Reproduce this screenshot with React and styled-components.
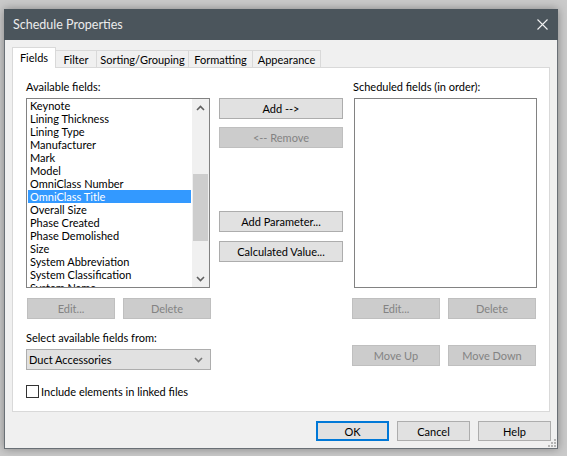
import React from "react";
import styled, { createGlobalStyle } from "styled-components";

const GlobalStyle = createGlobalStyle`
  html, body {
    margin: 0;
    padding: 0;
    background: #cacaca;
    width: 567px;
    height: 456px;
    overflow: hidden;
  }
  * {
    box-sizing: border-box;
  }
`;

const FONT = `"Lato", "Liberation Sans", sans-serif`;

const Dialog = styled.div`
  margin: 9px 0 0 4px;
  width: 554px;
  height: 440px;
  background: #f0f0f0;
  border: 1px solid #6a7076;
  border-top: none;
  box-shadow: 0 0 9px rgba(0, 0, 0, 0.35);
  display: flex;
  flex-direction: column;
  font-family: ${FONT};
  font-size: 11px;
  color: #000;
  position: relative;
`;

const TitleBar = styled.div`
  height: 31px;
  margin: 0 -1px;
  background: #4b555c;
  display: flex;
  align-items: center;
  justify-content: space-between;
  padding: 0 10px 0 9px;
  color: #ececec;
  font-size: 12.5px;
`;

const Body = styled.div`
  flex: 1;
  display: flex;
  flex-direction: column;
  padding: 8px 7px 0 7px;
`;

const TabStrip = styled.div`
  display: flex;
  align-items: flex-end;
  height: 20px;
  position: relative;
  z-index: 1;
  margin-bottom: -1px;
`;

const Tab = styled.div`
  width: ${(p) => p.$w}px;
  height: ${(p) => (p.$active ? 21 : 18)}px;
  background: ${(p) => (p.$active ? "#ffffff" : "#f0f0f0")};
  border: 1px solid #d9d9d9;
  border-bottom: ${(p) => (p.$active ? "none" : "1px solid #d9d9d9")};
  margin-left: ${(p) => (p.$first ? 0 : -1)}px;
  display: flex;
  align-items: center;
  justify-content: center;
  padding-bottom: ${(p) => (p.$active ? 2 : 0)}px;
  white-space: nowrap;
`;

const Panel = styled.div`
  height: 345px;
  background: #ffffff;
  border: 1px solid #d9d9d9;
  padding: 12px 0 0 13px;
  display: grid;
  grid-template-columns: 185px 125px 186px;
  column-gap: 8px;
  align-items: start;
`;

const Column = styled.div`
  display: flex;
  flex-direction: column;
  padding-top: ${(p) => p.$top || 0}px;
`;

const Label = styled.div`
  height: 14px;
  line-height: 14px;
  margin-top: ${(p) => p.$mt || 0}px;
  margin-left: ${(p) => p.$ml || 0}px;
  margin-bottom: 4px;
  white-space: nowrap;
`;

const ListBox = styled.div`
  height: 190px;
  width: ${(p) => p.$w}px;
  margin-left: ${(p) => p.$ml || 0}px;
  border: 1px solid #828282;
  background: #fff;
  display: flex;
`;

const Items = styled.div`
  flex: 1;
  padding: 0 1px;
  overflow: hidden;
`;

const Item = styled.div`
  height: 13px;
  line-height: 13px;
  padding-left: 2px;
  white-space: nowrap;
  background: ${(p) => (p.$selected ? "#3399ff" : "transparent")};
  color: ${(p) => (p.$selected ? "#ffffff" : "#000000")};
`;

const ScrollBar = styled.div`
  width: 17px;
  background: #f0f0f0;
  display: flex;
  flex-direction: column;
  align-items: center;
`;

const ScrollArrow = styled.div`
  height: 17px;
  width: 17px;
  display: flex;
  align-items: center;
  justify-content: center;
`;

const ScrollTrack = styled.div`
  flex: 1;
  width: 100%;
  display: flex;
  flex-direction: column;
  align-items: center;
  padding-top: 58px;
`;

const Thumb = styled.div`
  width: 15px;
  height: 67px;
  background: #cdcdcd;
`;

const ButtonRow = styled.div`
  display: flex;
  gap: 8px;
  margin-top: ${(p) => p.$mt || 0}px;
  margin-left: ${(p) => p.$ml || 0}px;
`;

const Button = styled.div`
  width: ${(p) => p.$w || 124}px;
  height: ${(p) => p.$h || 21}px;
  margin-top: ${(p) => p.$mt || 0}px;
  background: ${(p) => (p.$disabled ? "#cccccc" : "#e1e1e1")};
  border: ${(p) => (p.$default ? "2px solid #0078d7" : p.$disabled ? "1px solid #bfbfbf" : "1px solid #adadad")};
  color: ${(p) => (p.$disabled ? "#838383" : "#000000")};
  display: flex;
  align-items: center;
  justify-content: center;
  white-space: nowrap;
`;

const Select = styled.div`
  width: 185px;
  height: 21px;
  background: #e1e1e1;
  border: 1px solid #adadad;
  display: flex;
  align-items: center;
  justify-content: space-between;
  padding: 0 7px 0 2px;
`;

const CheckRow = styled.label`
  display: flex;
  align-items: center;
  gap: 2px;
  margin-top: 14px;
  height: 14px;
`;

const CheckBox = styled.span`
  width: 13px;
  height: 13px;
  border: 1px solid #333333;
  background: #ffffff;
`;

const Footer = styled.div`
  display: flex;
  justify-content: flex-end;
  gap: 8px;
  padding: 9px 0 0 0;
  margin-right: -1px;
`;

const Grip = styled.svg`
  position: absolute;
  right: 1px;
  bottom: 1px;
`;

const fields = [
  "Keynote",
  "Lining Thickness",
  "Lining Type",
  "Manufacturer",
  "Mark",
  "Model",
  "OmniClass Number",
  "OmniClass Title",
  "Overall Size",
  "Phase Created",
  "Phase Demolished",
  "Size",
  "System Abbreviation",
  "System Classification",
  "System Name",
];

const tabs = [
  { name: "Fields", w: 44 },
  { name: "Filter", w: 42 },
  { name: "Sorting/Grouping", w: 93 },
  { name: "Formatting", w: 65 },
  { name: "Appearance", w: 69 },
];

const Chevron = ({ up, color = "#606060" }) => (
  <svg width="9" height="6" viewBox="0 0 9 6">
    <path
      d={up ? "M1 5 L4.5 1.5 L8 5" : "M1 1 L4.5 4.5 L8 1"}
      fill="none"
      stroke={color}
      strokeWidth="1.6"
    />
  </svg>
);

const App = () => {
  return (
    <>
      <GlobalStyle />
      <Dialog>
        <TitleBar>
          <span>Schedule Properties</span>
          <svg width="11" height="11" viewBox="0 0 11 11">
            <path d="M0.5 0.5 L10.5 10.5 M10.5 0.5 L0.5 10.5" stroke="#f2f2f2" strokeWidth="1.1" />
          </svg>
        </TitleBar>
        <Body>
          <TabStrip>
            {tabs.map((t, i) => (
              <Tab key={t.name} $w={t.w} $active={i === 0} $first={i === 0}>
                {t.name}
              </Tab>
            ))}
          </TabStrip>
          <Panel>
            <Column>
              <Label>Available fields:</Label>
              <ListBox $w={184}>
                <Items>
                  {fields.map((f) => (
                    <Item key={f} $selected={f === "OmniClass Title"}>
                      {f}
                    </Item>
                  ))}
                </Items>
                <ScrollBar>
                  <ScrollArrow>
                    <Chevron up />
                  </ScrollArrow>
                  <ScrollTrack>
                    <Thumb />
                  </ScrollTrack>
                  <ScrollArrow>
                    <Chevron />
                  </ScrollArrow>
                </ScrollBar>
              </ListBox>
              <ButtonRow $mt={10} $ml={1}>
                <Button $w={88} $disabled>Edit...</Button>
                <Button $w={88} $disabled>Delete</Button>
              </ButtonRow>
              <Label $mt={12}>Select available fields from:</Label>
              <Select>
                <span>Duct Accessories</span>
                <Chevron color="#7a7a7a" />
              </Select>
              <CheckRow>
                <CheckBox />
                <span>Include elements in linked files</span>
              </CheckRow>
            </Column>
            <Column $top={18}>
              <Button>Add --&gt;</Button>
              <Button $mt={8} $disabled>&lt;-- Remove</Button>
              <Button $mt={63}>Add Parameter...</Button>
              <Button $mt={9}>Calculated Value...</Button>
            </Column>
            <Column>
              <Label $ml={1}>Scheduled fields (in order):</Label>
              <ListBox $w={183} $ml={2} />
              <ButtonRow $mt={10}>
                <Button $w={88} $disabled>Edit...</Button>
                <Button $w={88} $disabled>Delete</Button>
              </ButtonRow>
              <ButtonRow $mt={26}>
                <Button $w={88} $disabled>Move Up</Button>
                <Button $w={88} $disabled>Move Down</Button>
              </ButtonRow>
            </Column>
          </Panel>
          <Footer>
            <Button $w={73} $h={20} $default>OK</Button>
            <Button $w={73} $h={20}>Cancel</Button>
            <Button $w={73} $h={20}>Help</Button>
          </Footer>
        </Body>
        <Grip width="9" height="9" viewBox="0 0 9 9">
          <g fill="#b4b4b4">
            <rect x="7" y="1" width="2" height="2" />
            <rect x="4" y="4" width="2" height="2" />
            <rect x="7" y="4" width="2" height="2" />
            <rect x="1" y="7" width="2" height="2" />
            <rect x="4" y="7" width="2" height="2" />
            <rect x="7" y="7" width="2" height="2" />
          </g>
        </Grip>
      </Dialog>
    </>
  );
};

export default App;
